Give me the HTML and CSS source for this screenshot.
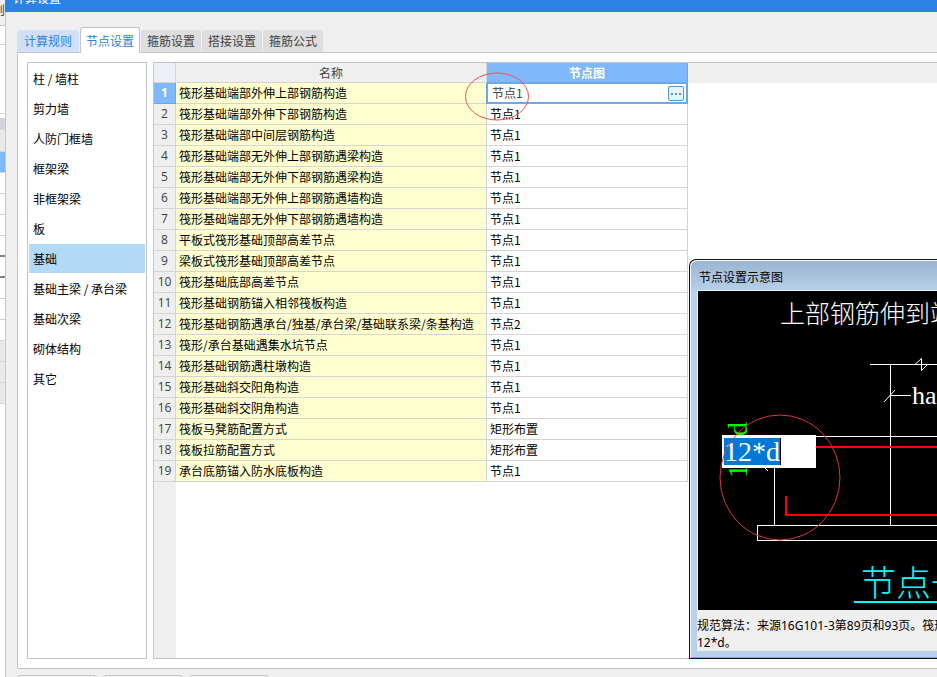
FILE: index.html
```html
<!DOCTYPE html>
<html lang="zh-CN">
<head>
<meta charset="utf-8">
<title>计算设置</title>
<link rel="stylesheet" href="styles.css">
</head>
<body>
<div class="backdrop" aria-hidden="true">
  <div class="bd-head">则</div>
  <div class="bd-row tall"></div>
  <div class="bd-row taller"></div>
  <div class="bd-row gap"></div>
  <div class="bd-row bar"></div>
  <div class="bd-row shade"></div>
  <div class="bd-row picked"></div>
  <div class="bd-row"></div>
  <div class="bd-row"></div>
  <div class="bd-row"></div>
  <div class="bd-row dark"></div>
  <div class="bd-row dark"></div>
  <div class="bd-row"></div>
  <div class="bd-row"></div>
  <div class="bd-row"></div>
  <div class="bd-row shade"></div>
  <div class="bd-row shade"></div>
  <div class="bd-row shade"></div>
</div>
<main class="dialog">
  <header class="titlebar"><h1>计算设置</h1></header>
  <div class="tabs" role="tablist">
    <button class="tab hot" role="tab">计算规则</button>
    <button class="tab active" role="tab" aria-selected="true">节点设置</button>
    <button class="tab" role="tab">箍筋设置</button>
    <button class="tab" role="tab">搭接设置</button>
    <button class="tab" role="tab">箍筋公式</button>
  </div>
  <section class="panel">
    <nav class="side">
      <button>柱 / 墙柱</button>
      <button>剪力墙</button>
      <button>人防门框墙</button>
      <button>框架梁</button>
      <button>非框架梁</button>
      <button>板</button>
      <button class="current">基础</button>
      <button>基础主梁 / 承台梁</button>
      <button>基础次梁</button>
      <button>砌体结构</button>
      <button>其它</button>
    </nav>
    <div class="sheet">
      <table>
        <colgroup><col class="c-num"><col class="c-name"><col class="c-node"></colgroup>
        <thead><tr><th></th><th>名称</th><th class="on">节点图</th></tr></thead>
        <tbody>
          <tr class="on"><th>1</th><td>筏形基础端部外伸上部钢筋构造</td><td class="edit"><div class="editor"><input type="text" value="节点1" aria-label="节点图"><button aria-label="选择节点"><svg width="16" height="15" viewBox="0 0 16 15"><path d="M3 7h2v2H3zM7 7h2v2H7zM11 7h2v2h-2z" fill="#4d97dd"/></svg></button></div></td></tr>
          <tr><th>2</th><td>筏形基础端部外伸下部钢筋构造</td><td>节点1</td></tr>
          <tr><th>3</th><td>筏形基础端部中间层钢筋构造</td><td>节点1</td></tr>
          <tr><th>4</th><td>筏形基础端部无外伸上部钢筋遇梁构造</td><td>节点1</td></tr>
          <tr><th>5</th><td>筏形基础端部无外伸下部钢筋遇梁构造</td><td>节点1</td></tr>
          <tr><th>6</th><td>筏形基础端部无外伸上部钢筋遇墙构造</td><td>节点1</td></tr>
          <tr><th>7</th><td>筏形基础端部无外伸下部钢筋遇墙构造</td><td>节点1</td></tr>
          <tr><th>8</th><td>平板式筏形基础顶部高差节点</td><td>节点1</td></tr>
          <tr><th>9</th><td>梁板式筏形基础顶部高差节点</td><td>节点1</td></tr>
          <tr><th>10</th><td>筏形基础底部高差节点</td><td>节点1</td></tr>
          <tr><th>11</th><td>筏形基础钢筋锚入相邻筏板构造</td><td>节点1</td></tr>
          <tr><th>12</th><td>筏形基础钢筋遇承台/独基/承台梁/基础联系梁/条基构造</td><td>节点2</td></tr>
          <tr><th>13</th><td>筏形/承台基础遇集水坑节点</td><td>节点1</td></tr>
          <tr><th>14</th><td>筏形基础钢筋遇柱墩构造</td><td>节点1</td></tr>
          <tr><th>15</th><td>筏形基础斜交阳角构造</td><td>节点1</td></tr>
          <tr><th>16</th><td>筏形基础斜交阴角构造</td><td>节点1</td></tr>
          <tr><th>17</th><td>筏板马凳筋配置方式</td><td>矩形布置</td></tr>
          <tr><th>18</th><td>筏板拉筋配置方式</td><td>矩形布置</td></tr>
          <tr><th>19</th><td>承台底筋锚入防水底板构造</td><td>节点1</td></tr>
        </tbody>
      </table>
      <svg class="mark" width="66" height="50" viewBox="0 0 66 50"><ellipse cx="33" cy="24.500" rx="31.500" ry="23.500" fill="none" stroke="#f0524f"/></svg>
    </div>
  </section>
  <footer class="footer">
    <button aria-label="导入"></button><button aria-label="导出"></button><button aria-label="恢复"></button>
  </footer>
</main>

<aside class="popup">
  <h2>节点设置示意图</h2>
  <div class="drawing">
    <svg class="cad" width="300" height="319" viewBox="0 0 300 319">
      <g fill="none" stroke="#fff" shape-rendering="crispEdges">
        <path d="M172 73.500H300M192.500 73V234M192 104.500H213M76 145.500H300M76.500 145V234M300 234.500H59.500V249.500H300"/>
      </g>
      <path d="M217 73.500L223.500 67.500V79.500L229.500 73.500M186 111L197 99M66 176l4 4" fill="none" stroke="#fff"/>
      <path d="M118 156H300M88 205V224H300" fill="none" stroke="#f00" stroke-width="2" shape-rendering="crispEdges"/>
      <path d="M156 311H300" stroke="#0ff" stroke-width="2" shape-rendering="crispEdges"/>
      <text class="note" x="82" y="32">上部钢筋伸到端部</text>
      <text class="dim" x="214" y="113">ha</text>
      <text class="len" transform="translate(49 187) rotate(-90)">12*d</text>
      <text class="name" x="163" y="305">节点一</text>
    </svg>
    <div class="value"><input id="len" type="text" value="12*d" aria-label="弯折长度"><i></i></div>
    <svg class="ring" width="122" height="127" viewBox="0 0 122 127"><ellipse cx="61" cy="63.500" rx="60" ry="62.500" fill="none" stroke="#dc3a3a"/></svg>
  </div>
  <p>规范算法：来源16G101-3第89页和93页。筏形基础<br>12*d。</p>
</aside>
<script src="main.js"></script>
</body>
</html>
```
FILE: styles.css
```css
* { box-sizing: border-box; }
body {
  margin: 0;
  height: 100vh;
  display: flex;
  overflow: hidden;
  position: relative;
  background: #efefef;
  color: #000;
  font: 12px/18px "Noto Sans CJK SC", sans-serif;
}
button, input { font: inherit; color: inherit; margin: 0; }

.backdrop { flex: 0 0 5px; background: #fff; overflow: hidden; }
.bd-head {
  height: 26px;
  padding-top: 1px;
  background: #efefef;
  border-bottom: 1px solid #c3c3c8;
  display: flex;
  justify-content: flex-end;
  color: #404040;
}
.bd-row { height: 21px; border-bottom: 1px solid #d3d3d8; }
.tall { height: 19px; }
.taller { height: 69px; }
.gap { height: 5px; }
.bar { height: 11px; background: #d2d2da; }
.shade { background: #e9e9e9; }
.shade:nth-child(6) { height: 22px; }
.picked { background: #7fb9fb; }
.dark { border-bottom: 2px solid #808080; }

.dialog {
  flex: 1;
  min-width: 0;
  display: flex;
  flex-direction: column;
  border-left: 1px solid #c1c8d3;
}
.titlebar {
  height: 12px;
  overflow: hidden;
  display: flex;
  align-items: flex-end;
  padding: 0 8px 5px;
  margin-left: -1px;
  background: #2e82e3;
}
.titlebar h1 { margin: 0; font-size: 12px; font-weight: 400; color: #fff; }

.tabs { display: flex; align-items: flex-end; gap: 1px; padding: 15px 0 0 11px; }
.tab {
  height: 22px;
  padding: 0 6px;
  border: 0;
  border-radius: 3px 3px 0 0;
  background: #dedede;
  color: #404040;
  white-space: nowrap;
}
.tab.hot { background: #cfe0f8; color: #2e82e3; padding: 0 7px; }
.tab.active {
  height: 26px;
  margin: 0 0 -1px;
  padding: 0 5px;
  position: relative;
  border: 1px solid #c1c4ca;
  border-bottom: 0;
  background: #fff;
  color: #2e82e3;
}
.panel {
  flex: 1;
  min-height: 0;
  display: flex;
  gap: 6px;
  margin-left: 11px;
  padding: 9px 0 9px 9px;
  background: #fff;
  border: 1px solid #c1c4ca;
  border-right: 0;
}
.side {
  flex: 0 0 120px;
  display: flex;
  flex-direction: column;
  gap: 1px;
  padding: 1px;
  border: 1px solid #c1c4ca;
}
.side button {
  height: 29px;
  padding: 0 4px;
  border: 0;
  background: none;
  text-align: left;
  white-space: nowrap;
}
.side .current { background: #b2daf5; }

.sheet {
  flex: 1;
  min-width: 0;
  position: relative;
  border: 1px solid #c1c4ca;
  border-right: 0;
  background:
    linear-gradient(#efefef, #efefef) 0 0 / 100% 20px no-repeat,
    linear-gradient(#efefef, #efefef) 0 0 / 22px 100% no-repeat,
    #fff;
}
table { width: 534px; table-layout: fixed; border-collapse: separate; border-spacing: 0; }
.c-num { width: 22px; }
.c-name { width: 311px; }
.c-node { width: 201px; }
th, td {
  height: 21px;
  padding: 0 3px;
  border: solid #d4d4d4;
  border-width: 0 1px 1px 0;
  line-height: 20px;
  text-align: left;
  white-space: nowrap;
}
thead th { height: 20px; line-height: 19px; text-align: center; font-weight: 400; color: #404040; }
thead th:first-child { background: #edf1f6; }
thead th.on { background: #7fb9fb; color: #fff; font-weight: 700; border-color: #6aa8e9; }
tbody th { padding: 0; text-align: center; font: 12px/20px "Open Sans", sans-serif; color: #404040; background: #efefef; }
.on th { background: #7fb9fb; color: #fff; font-weight: 700; border-color: #6aa8e9; }
tbody td:nth-child(2) { background: #ffffcf; }
td.edit { padding: 0; border: 0; }
.editor {
  display: flex;
  align-items: center;
  height: 21px;
  margin-left: -1px;
  padding: 0 2px 0 4px;
  border: 2px solid #6aa8e9;
  border-top-width: 1px;
  background: #fff;
}
.editor input { flex: 1; min-width: 0; height: 18px; padding: 0; border: 0; outline: 0; background: none; color: #404040; }
.editor button { width: 16px; height: 15px; padding: 0; border: 1px solid #4d97dd; border-radius: 2px; background: #e9f1fa; display: flex; align-items: center; justify-content: center; }
.editor svg { flex: none; }
.mark { position: absolute; left: 310px; top: 9px; pointer-events: none; }

.footer { flex: none; height: 8px; padding: 6px 0 0 11px; display: flex; gap: 6px; overflow: hidden; }
.footer button { width: 80px; height: 24px; border: 1px solid #c1c4ca; border-radius: 3px; background: #f4f4f4; }

.popup {
  position: absolute;
  left: 689px;
  right: 0;
  top: 259px;
  padding: 0 0 7px 7px;
  border: 1px solid #111;
  border-right: 0;
  border-radius: 7px 0 0 0;
  box-shadow: inset 1px 1px #f4f9ff, inset 0 -1px #39c5e6;
  background: linear-gradient(#99b4d1, #b9d1ea 32px);
}
.popup h2 { margin: 0; height: 31px; padding: 0 2px; font-size: 12px; font-weight: 400; line-height: 34px; }
.drawing { position: relative; height: 319px; margin-left: 1px; background: #000; outline: 1px solid #e8f0f8; overflow: hidden; }
.cad { display: block; }
.note { font-size: 25px; font-weight: 300; fill: #fff; }
.dim { font: 26px "Liberation Serif", serif; fill: #fff; }
.len { font: 28px "Liberation Serif", serif; fill: #0f0; }
.name { font-size: 35px; font-weight: 300; fill: #0ff; }
.value { position: absolute; left: 24px; top: 144px; width: 94px; height: 33px; padding: 3px 2px; background: #fff; display: flex; }
.value input { width: 100%; height: 27px; padding: 0; border: 0; outline: 0; background: none; font: 28px/27px "Liberation Serif", serif; }
.value input::selection { background: #0078d7; color: #fff; }
.value i { position: absolute; left: 58px; top: 3px; width: 1px; height: 27px; background: #000; }
.ring { position: absolute; left: 21px; top: 123px; pointer-events: none; }
.popup p { position: relative; margin: 0; padding: 7px 0 0; height: 41px; font-family: "Noto Sans", "Noto Sans CJK SC", sans-serif; line-height: 17px; background: #efefef; white-space: nowrap; overflow: hidden; }
```
FILE: main.js
```js
const len = document.getElementById('len');
len.focus();
len.select();
```
